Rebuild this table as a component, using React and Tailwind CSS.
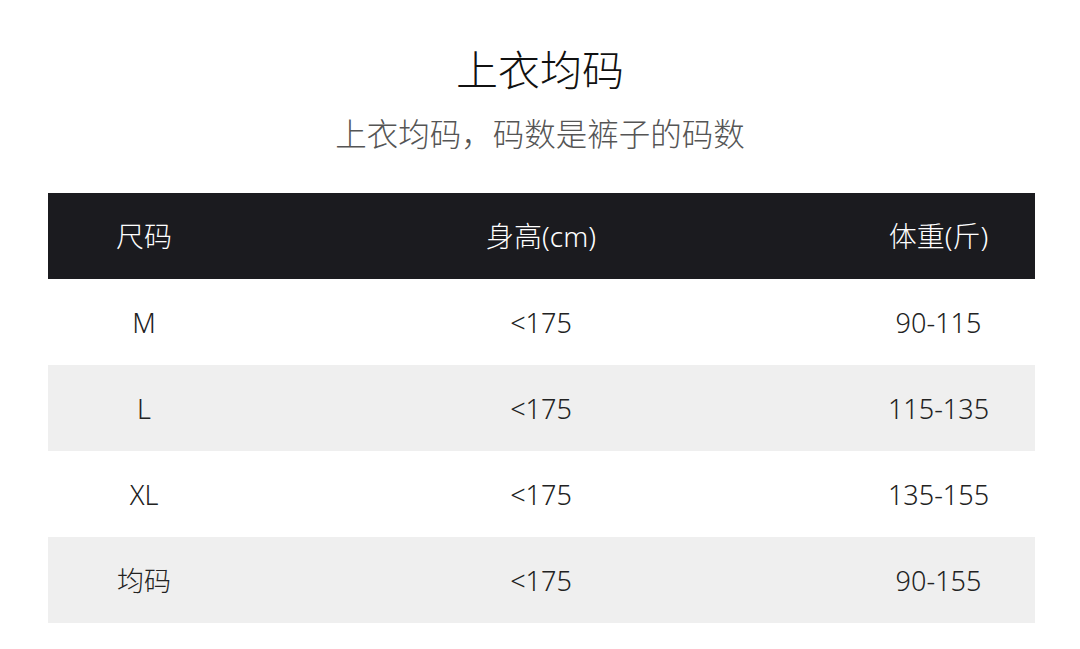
import React from 'react';

const rows = [
  { size: 'M', height: '<175', weight: '90-115' },
  { size: 'L', height: '<175', weight: '115-135' },
  { size: 'XL', height: '<175', weight: '135-155' },
  { size: '均码', height: '<175', weight: '90-155' },
];

const font = { fontFamily: '"Noto Sans", "Noto Sans CJK SC", sans-serif' };

function App() {
  return (
    <div className="w-[1080px] h-[649px] bg-white overflow-hidden font-light" style={font}>
      {/* 标题 */}
      <div className="pt-[44px] flex flex-col items-center">
        <h1 className="text-[42px] leading-[52px] text-[#111] font-light">上衣均码</h1>
        <p className="mt-[16px] text-[31.5px] leading-[44px] text-[#555]">上衣均码，码数是裤子的码数</p>
      </div>

      {/* 尺码表 */}
      <div className="mt-[37px] ml-[48px] w-[987px]">
        <div className="grid grid-cols-[192px_602px_193px] h-[86px] items-center bg-[#1b1b1f] text-white text-[28px]">
          <div className="text-center">尺码</div>
          <div className="text-center">身高(cm)</div>
          <div className="text-center">体重(斤)</div>
        </div>
        {rows.map((row, i) => (
          <div
            key={row.size}
            className={`grid grid-cols-[192px_602px_193px] h-[86px] items-center text-[27px] text-[#222] pt-[2px] ${
              i % 2 === 1 ? 'bg-[#efefef]' : 'bg-white'
            }`}
          >
            <div className="text-center">{row.size}</div>
            <div className="text-center">{row.height}</div>
            <div className="text-center">{row.weight}</div>
          </div>
        ))}
      </div>
    </div>
  );
}

export default App;
